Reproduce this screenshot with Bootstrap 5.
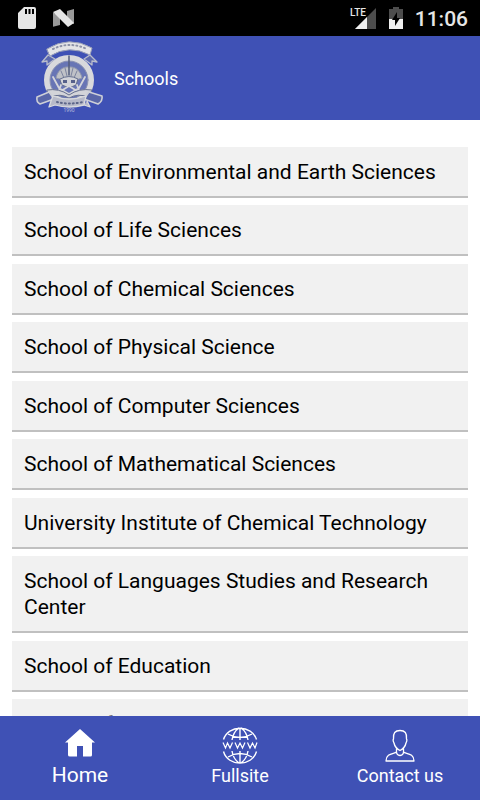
<!DOCTYPE html>
<html lang="en">
<head>
<meta charset="utf-8">
<meta name="viewport" content="width=device-width, initial-scale=1">
<title>Schools</title>
<link href="https://cdn.jsdelivr.net/npm/bootstrap@5.3.0/dist/css/bootstrap.min.css" rel="stylesheet">
<style>
  body { font-family: Roboto, "Noto Sans", sans-serif; color: #000; background: #fff; }
  .status-strip { height: 36px; background: #000; color: #e6e6e6; padding: 0 12px 0 17px; }
  .status-strip svg { display: block; }
  .battery { margin-left: 12px; }
  .clock { font-size: 21px; line-height: 24px; font-weight: 500; margin-left: 12px; padding-top: 2px; }
  .lte { font: 500 10px/11px Roboto, sans-serif; fill: #e6e6e6; }
  .app-header { height: 84px; background: #3f51b5; padding-left: 30px; }
  .app-header h1 { font-size: 18px; line-height: 24px; font-weight: 400; margin: 0 0 0 4px; padding-top: 2px; }
  .school-scroll { min-height: 0; padding: 27px 12px 0; }
  .school-item { font-size: 21px; line-height: 26px; background: #f1f1f1; color: #000;
    padding: 12px 12px 11px; border-bottom: 2px solid #c0c0c0; margin-bottom: 8px; }
  .school-item:nth-child(odd) { margin-bottom: 7px; }
  .bottom-bar { height: 84px; background: #3f51b5; }
  .bottom-bar a { font-size: 18px; line-height: 24px; padding-top: 11px; }
  .bottom-bar a.active { font-size: 21px; }
  .bottom-bar svg { display: block; }
</style>
<script src="https://cdn.jsdelivr.net/npm/bootstrap@5.3.0/dist/js/bootstrap.bundle.min.js" defer></script>
</head>
<body class="vh-100 d-flex flex-column overflow-hidden">
<div class="status-strip d-flex align-items-center flex-shrink-0">
  <svg width="20" height="24" viewBox="0 0 20 24" aria-hidden="true">
    <path fill="#e6e6e6" fill-rule="evenodd" d="M7 1H17Q19 1 19 3V21Q19 23 17 23H3Q1 23 1 21V7ZM8 3V8H10V3ZM11.500 3V8H13.500V3ZM15 3V8H17V3Z"/>
  </svg>
  <svg class="ms-3" width="22" height="20" viewBox="0 0 22 20" aria-hidden="true">
    <path fill="#999" d="M-1 4L7 8V17L-1 19ZM14 3L21 1V16L14 13Z"/>
    <path fill="#e6e6e6" d="M0 4L7 1L21 15L15 19Z"/>
  </svg>
  <svg class="ms-auto" width="28" height="24" viewBox="0 0 28 24" role="img" aria-label="LTE signal">
    <path fill="#4d4d4d" d="M27 2V23H6Z"/>
    <path fill="#f0f0f0" d="M18 11V23H6Z"/>
    <path fill="#000" d="M0 0H18V11H0Z"/>
    <text class="lte" x="1" y="10">LTE</text>
  </svg>
  <svg class="battery" width="14" height="24" viewBox="0 0 14 24" aria-hidden="true">
    <path fill="#4d4d4d" d="M0 3H4V1H10V3H14V13H0Z"/>
    <path fill="#f0f0f0" d="M0 13H14V23H0Z"/>
    <path fill="#000" d="M8 6L3 14H6V20L11 12H8Z"/>
  </svg>
  <span class="clock">11:06</span>
</div>

<header class="app-header d-flex align-items-center text-white flex-shrink-0">
  <svg width="80" height="84" viewBox="0 0 80 84" role="img" aria-label="University emblem">
    <g stroke-linejoin="round" stroke-linecap="round">
      <circle cx="39" cy="44" r="22" fill="#6875b5" stroke="#d9d9dc" stroke-width="6"/>
      <circle cx="39" cy="44" r="19" fill="none" stroke="#8c93b2" stroke-width="1"/>
      <path fill="#5c69ae" stroke="#b9bdcc" stroke-width="1.300" d="M18 19L12 26L17 25L17 29L25 23ZM60 19L67 26L62 25L62 29L54 23Z"/>
      <path fill="#e4e4e6" stroke="#9ba1b8" d="M17 13Q39 -1 62 12L60 19Q39 8 20 20Z"/>
      <path fill="none" stroke="#8d92a8" stroke-width="2" stroke-dasharray="1 3" d="M23 13Q39 5 57 13"/>
      <path fill="#bfc1c7" stroke="#9298ad" d="M39 31C32 30 27 36 26 42L33 44L39 41L46 44L52 42C51 36 46 30 39 31Z"/>
      <path fill="none" stroke="#7d849f" stroke-width="1" d="M31 35L34 42M35 32L37 40M47 35L44 42M43 32L41 40"/>
      <path fill="none" stroke="#535c7c" stroke-width="1.500" d="M39 20V39"/>
      <path fill="#d2d3d8" stroke="#66708f" d="M30 43Q39 38 48 43L46 49Q39 53 32 49Z"/>
      <path fill="#56608a" d="M33 44H37V47H33ZM41 44H45V47H41Z"/>
      <path fill="none" stroke="#d4d5da" stroke-width="1.800" d="M23 41L29 52L39 58L49 52L55 41M31 49L28 57M47 49L50 57M31 55L39 50L47 55"/>
      <path fill="#d3d4d9" stroke="#68718f" d="M17 54Q29 52 39 59Q49 52 62 54L58 61Q48 57 39 62Q30 57 21 61Z"/>
      <path fill="#5966a8" stroke="#cdcfd7" stroke-width="1.600" d="M19 56L7 61Q6 66 10 68L24 63ZM59 56L72 60Q73 65 68 68L54 63Z"/>
      <path fill="#b6b9c9" stroke="#d9dadd" stroke-width="1.300" d="M23 60Q39 66 56 60L54 69Q39 73 25 69L19 71L21 65ZM54 69L60 71L57 65"/>
      <path fill="none" stroke="#5d6689" stroke-width="2" stroke-dasharray="1 3" d="M27 66Q39 69 53 66"/>
    </g>
    <text x="39" y="76" text-anchor="middle" font-size="5" fill="#b4bbdc">1990</text>
  </svg>
  <h1>Schools</h1>
</header>

<main class="school-scroll flex-grow-1 overflow-hidden">
  <div>
    <a href="#" class="school-item d-block text-decoration-none">School of Environmental and Earth Sciences</a>
    <a href="#" class="school-item d-block text-decoration-none">School of Life Sciences</a>
    <a href="#" class="school-item d-block text-decoration-none">School of Chemical Sciences</a>
    <a href="#" class="school-item d-block text-decoration-none">School of Physical Science</a>
    <a href="#" class="school-item d-block text-decoration-none">School of Computer Sciences</a>
    <a href="#" class="school-item d-block text-decoration-none">School of Mathematical Sciences</a>
    <a href="#" class="school-item d-block text-decoration-none">University Institute of Chemical Technology</a>
    <a href="#" class="school-item d-block text-decoration-none">School of Languages Studies and Research Center</a>
    <a href="#" class="school-item d-block text-decoration-none">School of Education</a>
    <a href="#" class="school-item d-block text-decoration-none">School of Management Studies</a>
  </div>
</main>

<nav class="bottom-bar row g-0 flex-shrink-0 text-center" aria-label="Main">
  <a href="#" class="active col d-flex flex-column align-items-center text-white text-decoration-none" aria-current="page">
    <svg width="36" height="36" viewBox="0 0 36 36" aria-hidden="true">
      <path fill="#fff" d="M18 2L33 15.500H30V28Q30 29.500 28.500 29.500H21V19H15V29.500H8Q6 29.500 6 28V15.500H3Z"/>
    </svg>
    <span>Home</span>
  </a>
  <a href="#" class="col d-flex flex-column align-items-center text-white text-decoration-none">
    <svg width="36" height="37" viewBox="0 0 36 37" aria-hidden="true">
      <g fill="none" stroke="#fff" stroke-width="1.400">
        <path d="M1.500 12.500C6 -2.500 30 -2.500 34.500 12.500M1.500 24.500C6 40 30 40 34.500 24.500M18 1V13M18 24V36M10 13C11 7 14 3 17 1M26 13C25 7 22 3 19 1M10 24C11 30 14 34 17 36M26 24C25 30 22 34 19 36M6 7Q18 14 30 7M6 30Q18 23 30 30"/>
        <path stroke-width="1.200" d="M1 15.500L3.500 21L5.500 16L8 21L10.500 15.500M13 15.500L15.500 21L18 16L20.500 21L23 15.500M25.500 15.500L28 21L30.500 16L33 21L35 15.500"/>
      </g>
    </svg>
    <span>Fullsite</span>
  </a>
  <a href="#" class="col d-flex flex-column align-items-center text-white text-decoration-none">
    <svg width="30" height="37" viewBox="0 0 30 37" aria-hidden="true">
      <path fill="none" stroke="#fff" stroke-width="1.300" stroke-linejoin="round" d="M15 3.500C10 3.500 8 6 8.500 12Q7.500 13 9 16Q10 21 15 23.500Q20 21 21 16Q22.500 13 21.500 12C22 6 20 3.500 15 3.500ZM11.500 21V25C9 27 1 26 1 34H29C29 26 21 27 18.500 25V21M11.500 25Q11.500 28 15 28.500Q18.500 28 18.500 25"/>
    </svg>
    <span>Contact us</span>
  </a>
</nav>
</body>
</html>
